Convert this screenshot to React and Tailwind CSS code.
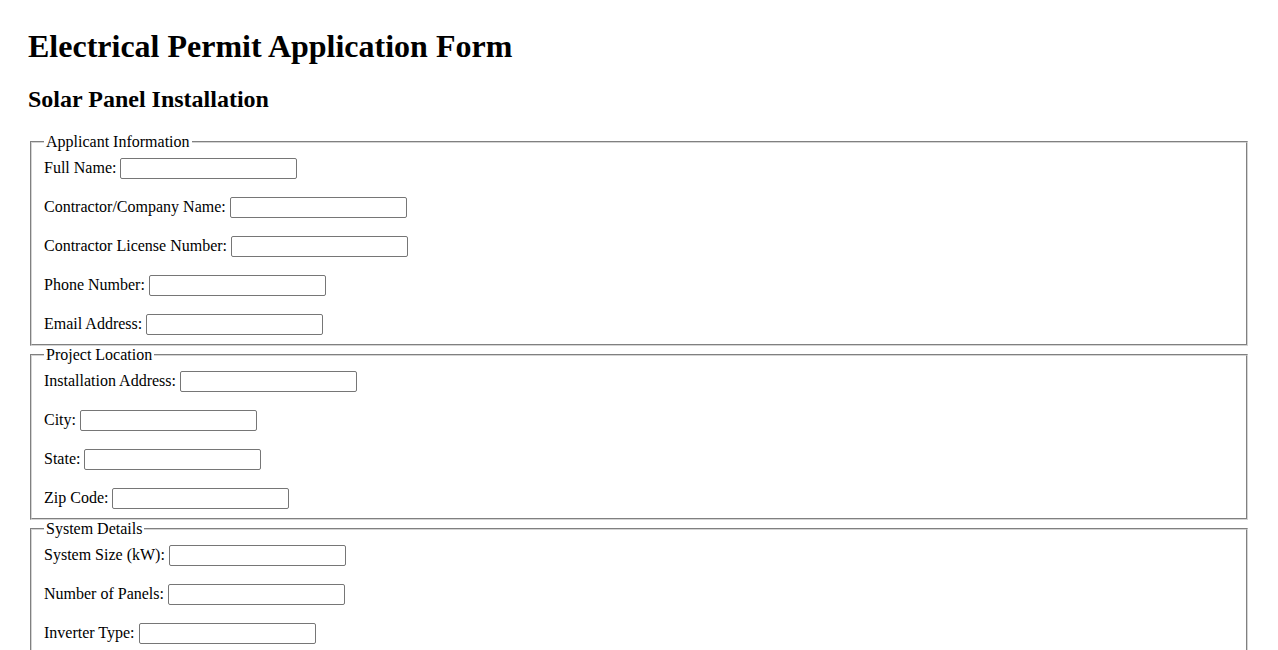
import React from "react";

const sections = [
  {
    title: "Applicant Information",
    fields: [
      "Full Name:",
      "Contractor/Company Name:",
      "Contractor License Number:",
      "Phone Number:",
      "Email Address:",
    ],
  },
  {
    title: "Project Location",
    fields: ["Installation Address:", "City:", "State:", "Zip Code:"],
  },
  {
    title: "System Details",
    fields: ["System Size (kW):", "Number of Panels:", "Inverter Type:"],
    tall: true,
  },
];

function Field({ label }) {
  return (
    <div className="flex items-center gap-[4px] h-[21px] mt-[18px] first:mt-0">
      <label className="leading-none whitespace-nowrap -mt-[1px]">{label}</label>
      <input
        type="text"
        className="w-[177px] h-[21px] border border-[#767676] rounded-[2px] bg-white"
      />
    </div>
  );
}

export default function App() {
  return (
    <div className="min-h-screen bg-white text-black px-[28px] pt-[28px] pb-[28px] font-['Liberation_Serif',serif] text-[16px]">
      <h1 className="text-[32px] font-bold leading-[36px] mb-[21px]">
        Electrical Permit Application Form
      </h1>
      <h2 className="text-[24px] font-bold leading-[28px] mb-[20px]">
        Solar Panel Installation
      </h2>
      <form>
        {sections.map((s) => (
          <fieldset
            key={s.title}
            className={`mx-[2px] border-2 [border-style:groove] border-[#d4d4d4] px-[12px] pt-0 ${
              s.tall ? "pb-[60px]" : "pb-[9px]"
            }`}
          >
            <legend className="px-[2px] leading-[18px]">{s.title}</legend>
            <div className="pt-[7px]">
              {s.fields.map((f) => (
                <Field key={f} label={f} />
              ))}
            </div>
          </fieldset>
        ))}
      </form>
    </div>
  );
}
